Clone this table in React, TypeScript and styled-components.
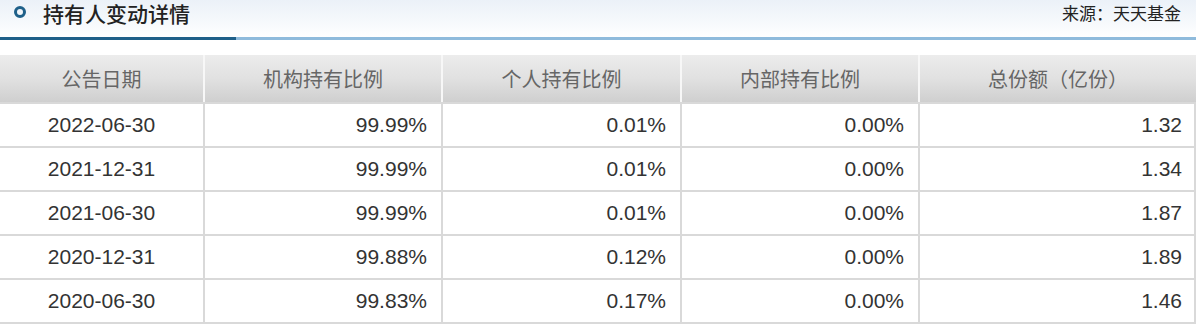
import React from "react";
import styled, { createGlobalStyle } from "styled-components";

const Global = createGlobalStyle`
  html, body { margin: 0; padding: 0; background: #fff; }
  body { font-family: "Liberation Sans", "Noto Sans CJK SC", sans-serif; }
`;

const Page = styled.div`
  width: 1196px;
`;

const TitleBar = styled.div`
  height: 37px;
  display: flex;
  align-items: flex-start;
  justify-content: space-between;
  padding: 1px 15px 0 14px;
  background: linear-gradient(to bottom, #ebf1f8 0%, #f6f9fc 60%, #ffffff 100%);
  box-sizing: border-box;
`;

const TitleLeft = styled.div`
  display: flex;
  align-items: center;
  gap: 17px;
  height: 24px;
`;

const Ring = styled.span`
  width: 6px;
  height: 6px;
  border: 3px solid #1f6089;
  border-radius: 50%;
  display: inline-block;
  margin-top: -3px;
`;

const Title = styled.h2`
  margin: 0;
  font-family: "Noto Sans CJK SC", sans-serif;
  font-size: 21px;
  font-weight: 500;
  color: #222;
  line-height: 24px;
`;

const Source = styled.span`
  font-family: "Noto Sans CJK SC", sans-serif;
  font-size: 17px;
  color: #222;
  line-height: 24px;
`;

const Underline = styled.div`
  display: flex;
  height: 3px;
`;

const UnderlineSeg = styled.div<{ $w?: number; $c: string }>`
  background: ${(p) => p.$c};
  ${(p) => (p.$w ? `width: ${p.$w}px;` : "flex: 1;")}
`;

const Table = styled.div`
  margin-top: 15px;
  display: grid;
  grid-template-columns: 203px 238px 239px 238px 278px;
  border-bottom: 2px solid #d9d9d9;
  border-right: 2px solid #d9d9d9;
  box-sizing: border-box;
`;

const HeadCell = styled.div<{ $first?: boolean }>`
  height: 47px;
  display: flex;
  align-items: center;
  justify-content: center;
  background: linear-gradient(to bottom, #ececec 0%, #e1e1e1 50%, #cfcfcf 100%);
  border-left: ${(p) => (p.$first ? "none" : "2px solid #f7f7f7")};
  font-family: "Noto Sans CJK SC", sans-serif;
  font-size: 20px;
  color: #666;
  box-sizing: border-box;
`;

const Cell = styled.div<{ $first?: boolean }>`
  height: 44px;
  display: flex;
  align-items: center;
  justify-content: ${(p) => (p.$first ? "center" : "flex-end")};
  padding-right: ${(p) => (p.$first ? "0" : "14px")};
  border-top: 2px solid #d9d9d9;
  border-left: ${(p) => (p.$first ? "none" : "2px solid #d9d9d9")};
  font-size: 21px;
  color: #333;
  box-sizing: border-box;
`;

const headers = ["公告日期", "机构持有比例", "个人持有比例", "内部持有比例", "总份额（亿份）"];
const rows = [
  ["2022-06-30", "99.99%", "0.01%", "0.00%", "1.32"],
  ["2021-12-31", "99.99%", "0.01%", "0.00%", "1.34"],
  ["2021-06-30", "99.99%", "0.01%", "0.00%", "1.87"],
  ["2020-12-31", "99.88%", "0.12%", "0.00%", "1.89"],
  ["2020-06-30", "99.83%", "0.17%", "0.00%", "1.46"],
];

export default function App() {
  return (
    <Page>
      <Global />
      <TitleBar>
        <TitleLeft>
          <Ring />
          <Title>持有人变动详情</Title>
        </TitleLeft>
        <Source>来源：天天基金</Source>
      </TitleBar>
      <Underline>
        <UnderlineSeg $w={236} $c="#1f6089" />
        <UnderlineSeg $c="#8fbbdc" />
      </Underline>
      <Table>
        {headers.map((h, i) => (
          <HeadCell key={h} $first={i === 0}>
            {h}
          </HeadCell>
        ))}
        {rows.map((r) =>
          r.map((c, i) => (
            <Cell key={r[0] + i} $first={i === 0}>
              {c}
            </Cell>
          ))
        )}
      </Table>
    </Page>
  );
}
